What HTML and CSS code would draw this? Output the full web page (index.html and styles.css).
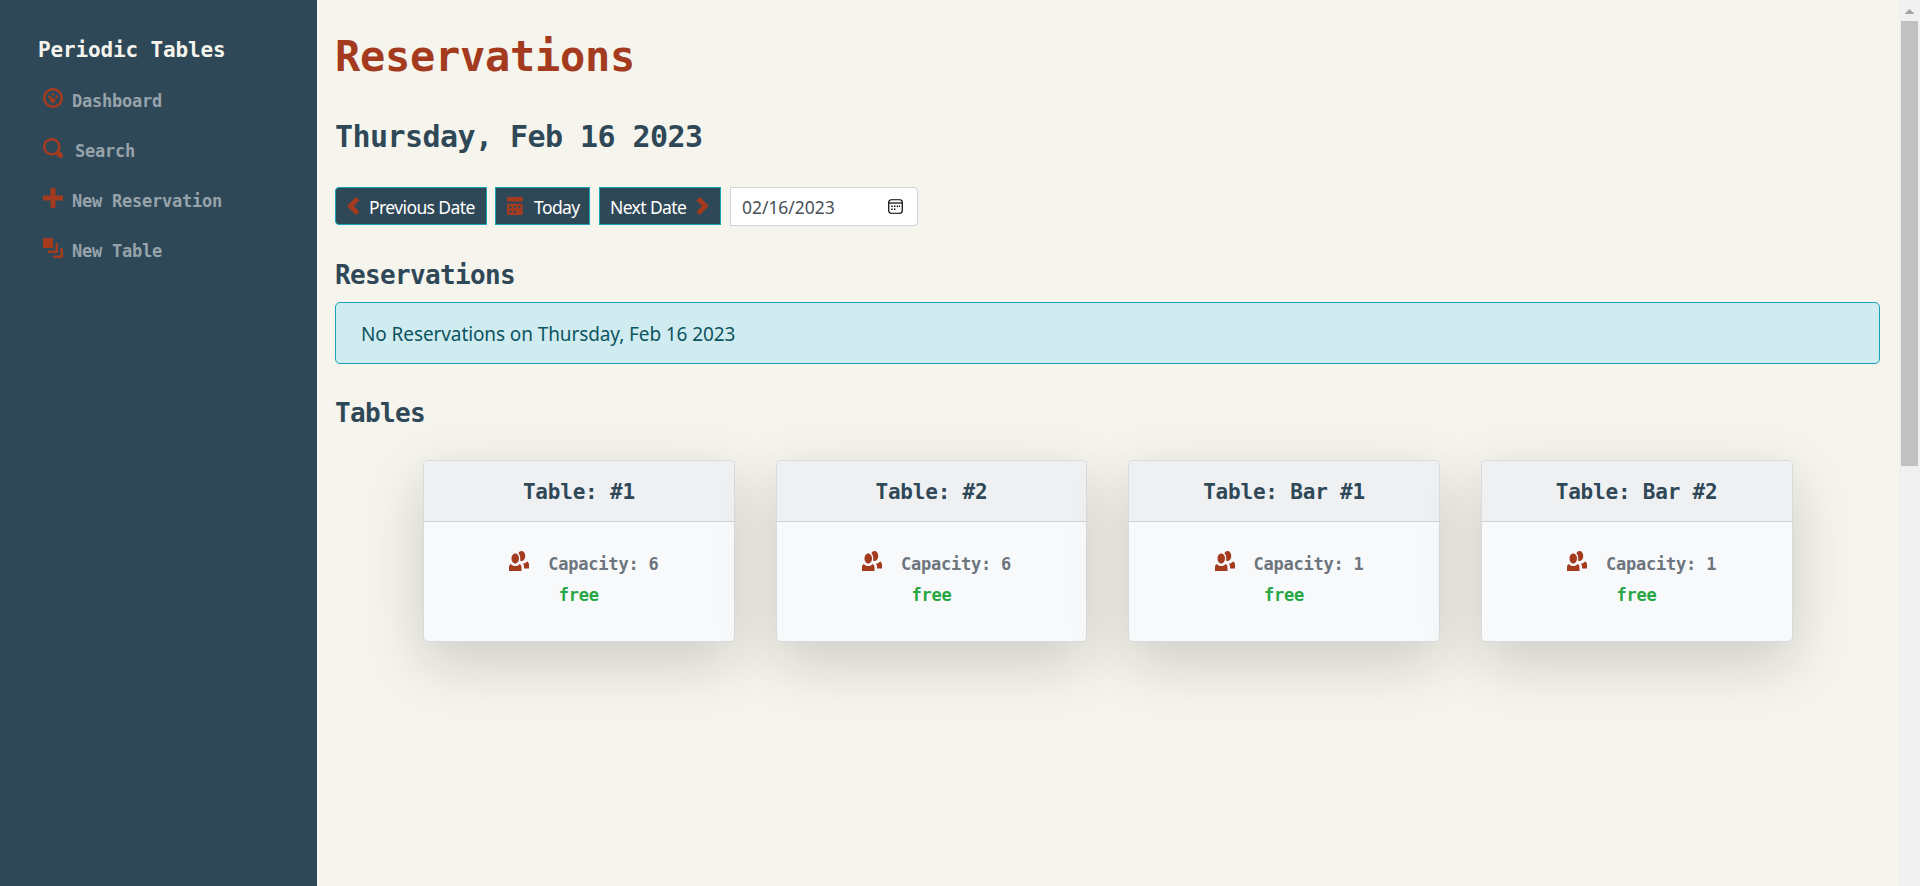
FILE: index.html
```html
<!DOCTYPE html>
<html lang="en">
<head>
<meta charset="utf-8">
<title>Periodic Tables</title>
<link rel="stylesheet" href="styles.css">
</head>
<body>
<svg class="sprite" aria-hidden="true">
  <symbol id="dashboard" viewBox="0 0 8 8"><path d="M4 0c-2.2 0-4 1.8-4 4s1.8 4 4 4 4-1.8 4-4-1.8-4-4-4zm0 1c1.66 0 3 1.34 3 3s-1.34 3-3 3-3-1.34-3-3 1.34-3 3-3zm0 1c-.28 0-.5.22-.5.5s.22.5.5.5.5-.22.5-.5-.22-.5-.5-.5zm-1.66 1a.5.5 0 0 0-.19.84l.91.91c-.02.08-.06.16-.06.25 0 .55.45 1 1 1s1-.45 1-1-.45-1-1-1c-.09 0-.17.04-.25.06l-.91-.91a.5.5 0 0 0-.5-.15zm3.16 0c-.28 0-.5.22-.5.5s.22.5.5.5.5-.22.5-.5-.22-.5-.5-.5z"/></symbol>
  <symbol id="search" viewBox="0 0 8 8"><path d="M3.500 0c-1.930 0-3.500 1.570-3.500 3.500s1.570 3.500 3.500 3.500c.590 0 1.170-.140 1.660-.410a1 1 0 0 0 .130.130l1 1a1.020 1.020 0 1 0 1.440-1.440l-1-1a1 1 0 0 0-.160-.130c.270-.490.440-1.060.440-1.660 0-1.930-1.550-3.500-3.500-3.500zm0 1c1.390 0 2.500 1.100 2.500 2.500 0 .660-.240 1.270-.660 1.720l-.030.030a1 1 0 0 0-.130.130c-.440.400-1.040.630-1.690.630-1.390 0-2.500-1.100-2.500-2.500s1.100-2.500 2.500-2.500z"/></symbol>
  <symbol id="plus" viewBox="0 0 8 8"><path d="M3 0v3h-3v2h3v3h2v-3h3v-2h-3v-3h-2z"/></symbol>
  <symbol id="layers" viewBox="0 0 8 8"><path d="M0 0v4h4v-4h-4zm5 2v3h-3v1h4v-4h-1zm2 2v3h-3v1h4v-4h-1z"/></symbol>
  <symbol id="left" viewBox="0 0 8 8"><path d="M4 0l-4 4 4 4 1.5-1.5-2.5-2.5 2.5-2.5-1.5-1.5z"/></symbol>
  <symbol id="right" viewBox="-2.4 0 8 8"><path d="M1.5 0l-1.5 1.5 2.5 2.5-2.5 2.5 1.5 1.5 4-4-4-4z"/></symbol>
  <symbol id="calendar" viewBox="0 0 8 8"><path d="M0 0v2h7v-2h-7zm0 3v4.91c0 .05.04.09.09.09h6.81c.05 0 .09-.04.09-.09v-4.91h-7zm1 1h1v1h-1v-1zm2 0h1v1h-1v-1zm2 0h1v1h-1v-1zm-4 2h1v1h-1v-1zm2 0h1v1h-1v-1z"/></symbol>
  <symbol id="people" viewBox=".5 0 8 8"><path d="M5.5 0c-.51 0-.95.35-1.22.88.45.54.72 1.28.72 2.13 0 .29-.03.55-.09.81.19.11.38.19.59.19.83 0 1.5-.9 1.5-2s-.67-2-1.5-2zm-2.500 1c-.83 0-1.5.9-1.5 2s.67 2 1.5 2 1.5-.9 1.5-2-.67-2-1.5-2zm4.750 3.160c-.43.51-1.02.82-1.69.84.27.38.44.84.44 1.34v.66h2v-1.66c0-.52-.31-.97-.75-1.19zm-6.500 1c-.44.22-.75.67-.75 1.19v1.66h5v-1.66c0-.52-.31-.97-.75-1.19-.45.53-1.06.84-1.75.84s-1.3-.32-1.75-.84z"/></symbol>
</svg>
<div class="app">
  <nav class="sidebar">
    <div class="brand">Periodic Tables</div>
    <a class="nav-link"><svg class="icon"><use href="#dashboard"/></svg><span>Dashboard</span></a>
    <a class="nav-link nav-search"><svg class="icon"><use href="#search"/></svg><span>Search</span></a>
    <a class="nav-link"><svg class="icon"><use href="#plus"/></svg><span>New Reservation</span></a>
    <a class="nav-link"><svg class="icon"><use href="#layers"/></svg><span>New Table</span></a>
  </nav>
  <main class="main">
    <h1>Reservations</h1>
    <h2>Thursday, Feb 16 2023</h2>
    <div class="toolbar">
      <button class="btn btn-prev"><svg class="icon"><use href="#left"/></svg><span>Previous Date</span></button>
      <button class="btn btn-today"><svg class="icon"><use href="#calendar"/></svg><span>Today</span></button>
      <button class="btn btn-next"><span>Next Date</span><svg class="icon"><use href="#right"/></svg></button>
      <div class="date-field"><span>02/16/2023</span>
        <svg class="picker" viewBox="0 0 15 15"><rect x=".75" y=".75" width="13.5" height="13.5" rx="2.5" fill="none" stroke="#000" stroke-width="1.2"/><path d="M1 4h13" stroke="#000" stroke-width="1.2"/><path d="M6 6.500h1.400v1.400H6zM8.700 6.500h1.400v1.400H8.700zM11 6.500h1v1.400H11zM3.300 6.500h1.400v1.400H3.300zM3.300 9.500h1.400v1.400H3.300zM6 9.500h1.400v1.400H6z"/></svg>
      </div>
    </div>
    <h3 class="res-title">Reservations</h3>
    <div class="alert"><span>No Reservations on Thursday, Feb 16 2023</span></div>
    <h3 class="tables-title">Tables</h3>
    <section class="cards">
      <article class="card"><h4>Table: #1</h4><div class="body"><div class="capacity"><svg class="icon"><use href="#people"/></svg><span>Capacity: 6</span></div><div class="status">free</div></div></article>
      <article class="card"><h4>Table: #2</h4><div class="body"><div class="capacity"><svg class="icon"><use href="#people"/></svg><span>Capacity: 6</span></div><div class="status">free</div></div></article>
      <article class="card"><h4>Table: Bar #1</h4><div class="body"><div class="capacity"><svg class="icon"><use href="#people"/></svg><span>Capacity: 1</span></div><div class="status">free</div></div></article>
      <article class="card"><h4>Table: Bar #2</h4><div class="body"><div class="capacity"><svg class="icon"><use href="#people"/></svg><span>Capacity: 1</span></div><div class="status">free</div></div></article>
    </section>
  </main>
  <div class="scrollbar"><svg class="arrow" viewBox="0 0 9 5"><path d="M4.500 0L9 4.500V5H0V4.500z"/></svg><div class="thumb"></div></div>
</div>
</body>
</html>
```
FILE: styles.css
```css
* { box-sizing: border-box; }
body { margin: 0; height: 886px; overflow: hidden; background: #f6f5ed; color: #2f4858; font-family: "Noto Sans", sans-serif; }
.sprite { display: none; }
.app { display: flex; height: 886px; }
.icon { flex: none; width: 20px; height: 20px; fill: #a43b1f; }
.sidebar, h1, h2, h3, h4, .body { font-family: "DejaVu Sans Mono", monospace; font-weight: 700; }
h1, h2, h3, h4 { margin: 0; white-space: nowrap; }

.sidebar { flex: none; width: 317px; padding: 35px 0 0 38px; background: #2f4858; }
.brand { height: 30px; line-height: 30px; margin-bottom: 11px; font-size: 21px; letter-spacing: -.14px; color: #f6f5ed; }
.nav-link { display: flex; height: 50px; padding: 12px 0 0 4.500px; gap: 9.500px; font-size: 17px; line-height: 26px; letter-spacing: -.23px; color: #97a3ab; }
.nav-link span { padding-top: 0; }
.nav-search { gap: 12.500px; }

.main { flex: 1; min-width: 0; padding: 21px 19px 0 18px; }
h1 { height: 72px; line-height: 72px; font-size: 42px; letter-spacing: -.28px; color: #a43b1f; }
h2 { height: 42px; margin-top: 23px; line-height: 42px; font-size: 30px; letter-spacing: -.56px; }
.toolbar { display: flex; height: 39px; margin-top: 29px; align-items: flex-start; }
.btn { display: flex; align-items: center; height: 38px; padding: 0 10px 0 11px; border: 1px solid #17a2b8; border-radius: 0; background: #2f4858; color: #fff; font: 17.500px/26px "Noto Sans", sans-serif; letter-spacing: -.6px; white-space: nowrap; }
.btn span, .date-field span { padding-top: 1px; }
.btn .icon { width: 18px; height: 18px; }
.btn-prev { width: 152px; margin-right: 8px; gap: 4px; border-radius: 4px 0 0 4px; }
.btn-today { width: 95px; margin-right: 9px; gap: 9px; }
.btn-next { width: 122px; margin-right: 9px; padding: 0 11px 0 10px; justify-content: space-between; }
.date-field { display: flex; align-items: center; justify-content: space-between; width: 188px; height: 39px; padding: 0 14px 0 11px; border: 1px solid #ced4da; border-radius: 0 4px 4px 0; background: #fff; color: #495057; font-size: 17.500px; letter-spacing: -.05px; }
.picker { width: 15px; height: 15px; }
.res-title { height: 36px; margin-top: 31px; }
h3 { line-height: 37px; font-size: 26px; letter-spacing: -.65px; }
.alert { display: flex; align-items: center; height: 62px; margin-top: 9px; padding: 2px 25px 0; border: 1px solid #17a2b8; border-radius: 5px; background: #d1ecf1; color: #0c5460; font-size: 19px; line-height: 30px; letter-spacing: -.1px; }
.tables-title { height: 36px; margin-top: 31px; }
.cards { display: grid; grid-template-columns: repeat(4, 1fr); gap: 40.800px; margin: 29px 87.500px 0 88px; }
.card { height: 182px; border: 1px solid #d8dbdc; border-radius: 5px; background: #f8f9fa; box-shadow: 0 20px 60px rgba(0,0,0,.175); text-align: center; overflow: hidden; }
h4 { height: 61px; line-height: 62px; border-bottom: 1px solid #d0d3d6; background: #eff0f2; font-size: 21px; letter-spacing: -.2px; }
.body { padding-top: 27px; font-size: 17px; letter-spacing: -.23px; line-height: 31px; }
.capacity { display: flex; justify-content: center; gap: 19px; height: 31px; padding-left: 10px; color: #6c757d; }
.capacity .icon { margin-top: 2px; }
.status { color: #28a745; }

.scrollbar { flex: none; width: 21px; padding: 9px 2px 0; background: #f0f0f0; }
.arrow { display: block; width: 9px; height: 5px; margin-left: 4px; fill: #a3a3a3; }
.thumb { width: 17px; height: 445px; margin-top: 7px; background: #c1c1c1; }
```
